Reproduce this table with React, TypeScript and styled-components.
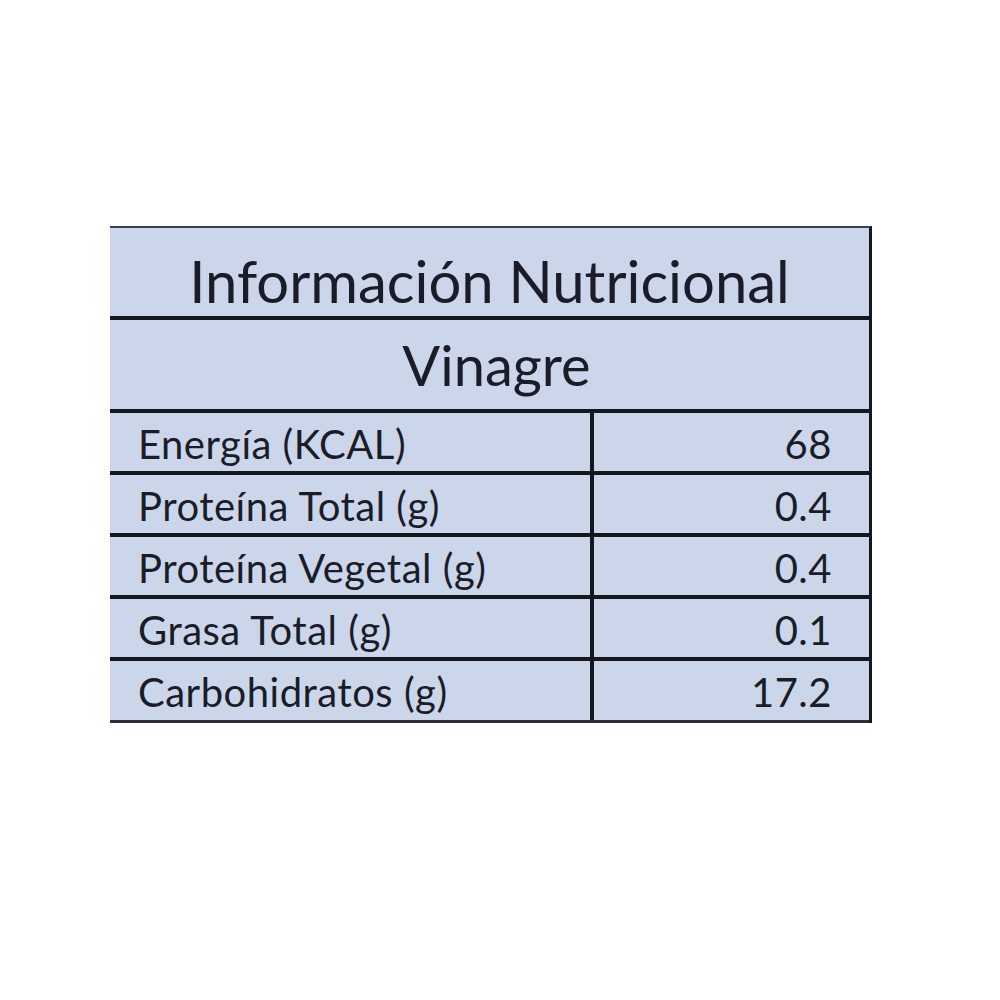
import styled, { createGlobalStyle } from "styled-components";

const GlobalStyle = createGlobalStyle`
  html, body {
    margin: 0;
    padding: 0;
    background: #ffffff;
  }
  body {
    font-family: Lato, "Noto Sans", sans-serif;
    color: #1a1d28;
  }
`;

interface Nutrient {
  name: string;
  value: string;
}

const nutrients: Nutrient[] = [
  { name: "Energía (KCAL)", value: "68" },
  { name: "Proteína Total (g)", value: "0.4" },
  { name: "Proteína Vegetal (g)", value: "0.4" },
  { name: "Grasa Total (g)", value: "0.1" },
  { name: "Carbohidratos (g)", value: "17.2" },
];

export default function App() {
  return (
    <>
      <GlobalStyle />
      <Page>
        <Label>
          <Title>Información Nutricional</Title>
          <Product>Vinagre</Product>
          {nutrients.map((n, i) => (
            <Row key={n.name} last={i === nutrients.length - 1}>
              <NameCell>{n.name}</NameCell>
              <ValueCell>{n.value}</ValueCell>
            </Row>
          ))}
        </Label>
      </Page>
    </>
  );
}

const Page = styled.div`
  width: 1000px;
  height: 1000px;
  box-sizing: border-box;
  padding: 226px 0 0 110px;
`;

const Label = styled.section`
  width: 762px;
  box-sizing: border-box;
  background: #ccd6eb;
  border-top: 2px solid #3a3f4e;
  border-right: 3px solid #15171f;
  display: flex;
  flex-direction: column;
`;

const Title = styled.div`
  height: 92px;
  box-sizing: border-box;
  padding-top: 16px;
  line-height: 74px;
  font-size: 58px;
  text-align: center;
  border-bottom: 4px solid #15171f;
  white-space: nowrap;
`;

const Product = styled.div`
  height: 93px;
  box-sizing: border-box;
  padding: 6px 0 0 14px;
  line-height: 78px;
  font-size: 56px;
  text-align: center;
  border-bottom: 4px solid #15171f;
`;

const Row = styled.div<{ last?: boolean }>`
  display: grid;
  grid-template-columns: 484px 1fr;
  height: 62px;
  box-sizing: border-box;
  border-bottom: ${({ last }) => (last ? "3px solid #2a2e3a" : "4px solid #15171f")};
  font-size: 40px;
  letter-spacing: 0.5px;
`;

const NameCell = styled.div`
  padding: 4px 0 0 28px;
  line-height: 54px;
  border-right: 4px solid #15171f;
  white-space: nowrap;
`;

const ValueCell = styled.div`
  padding: 4px 37px 0 0;
  line-height: 54px;
  text-align: right;
`;
